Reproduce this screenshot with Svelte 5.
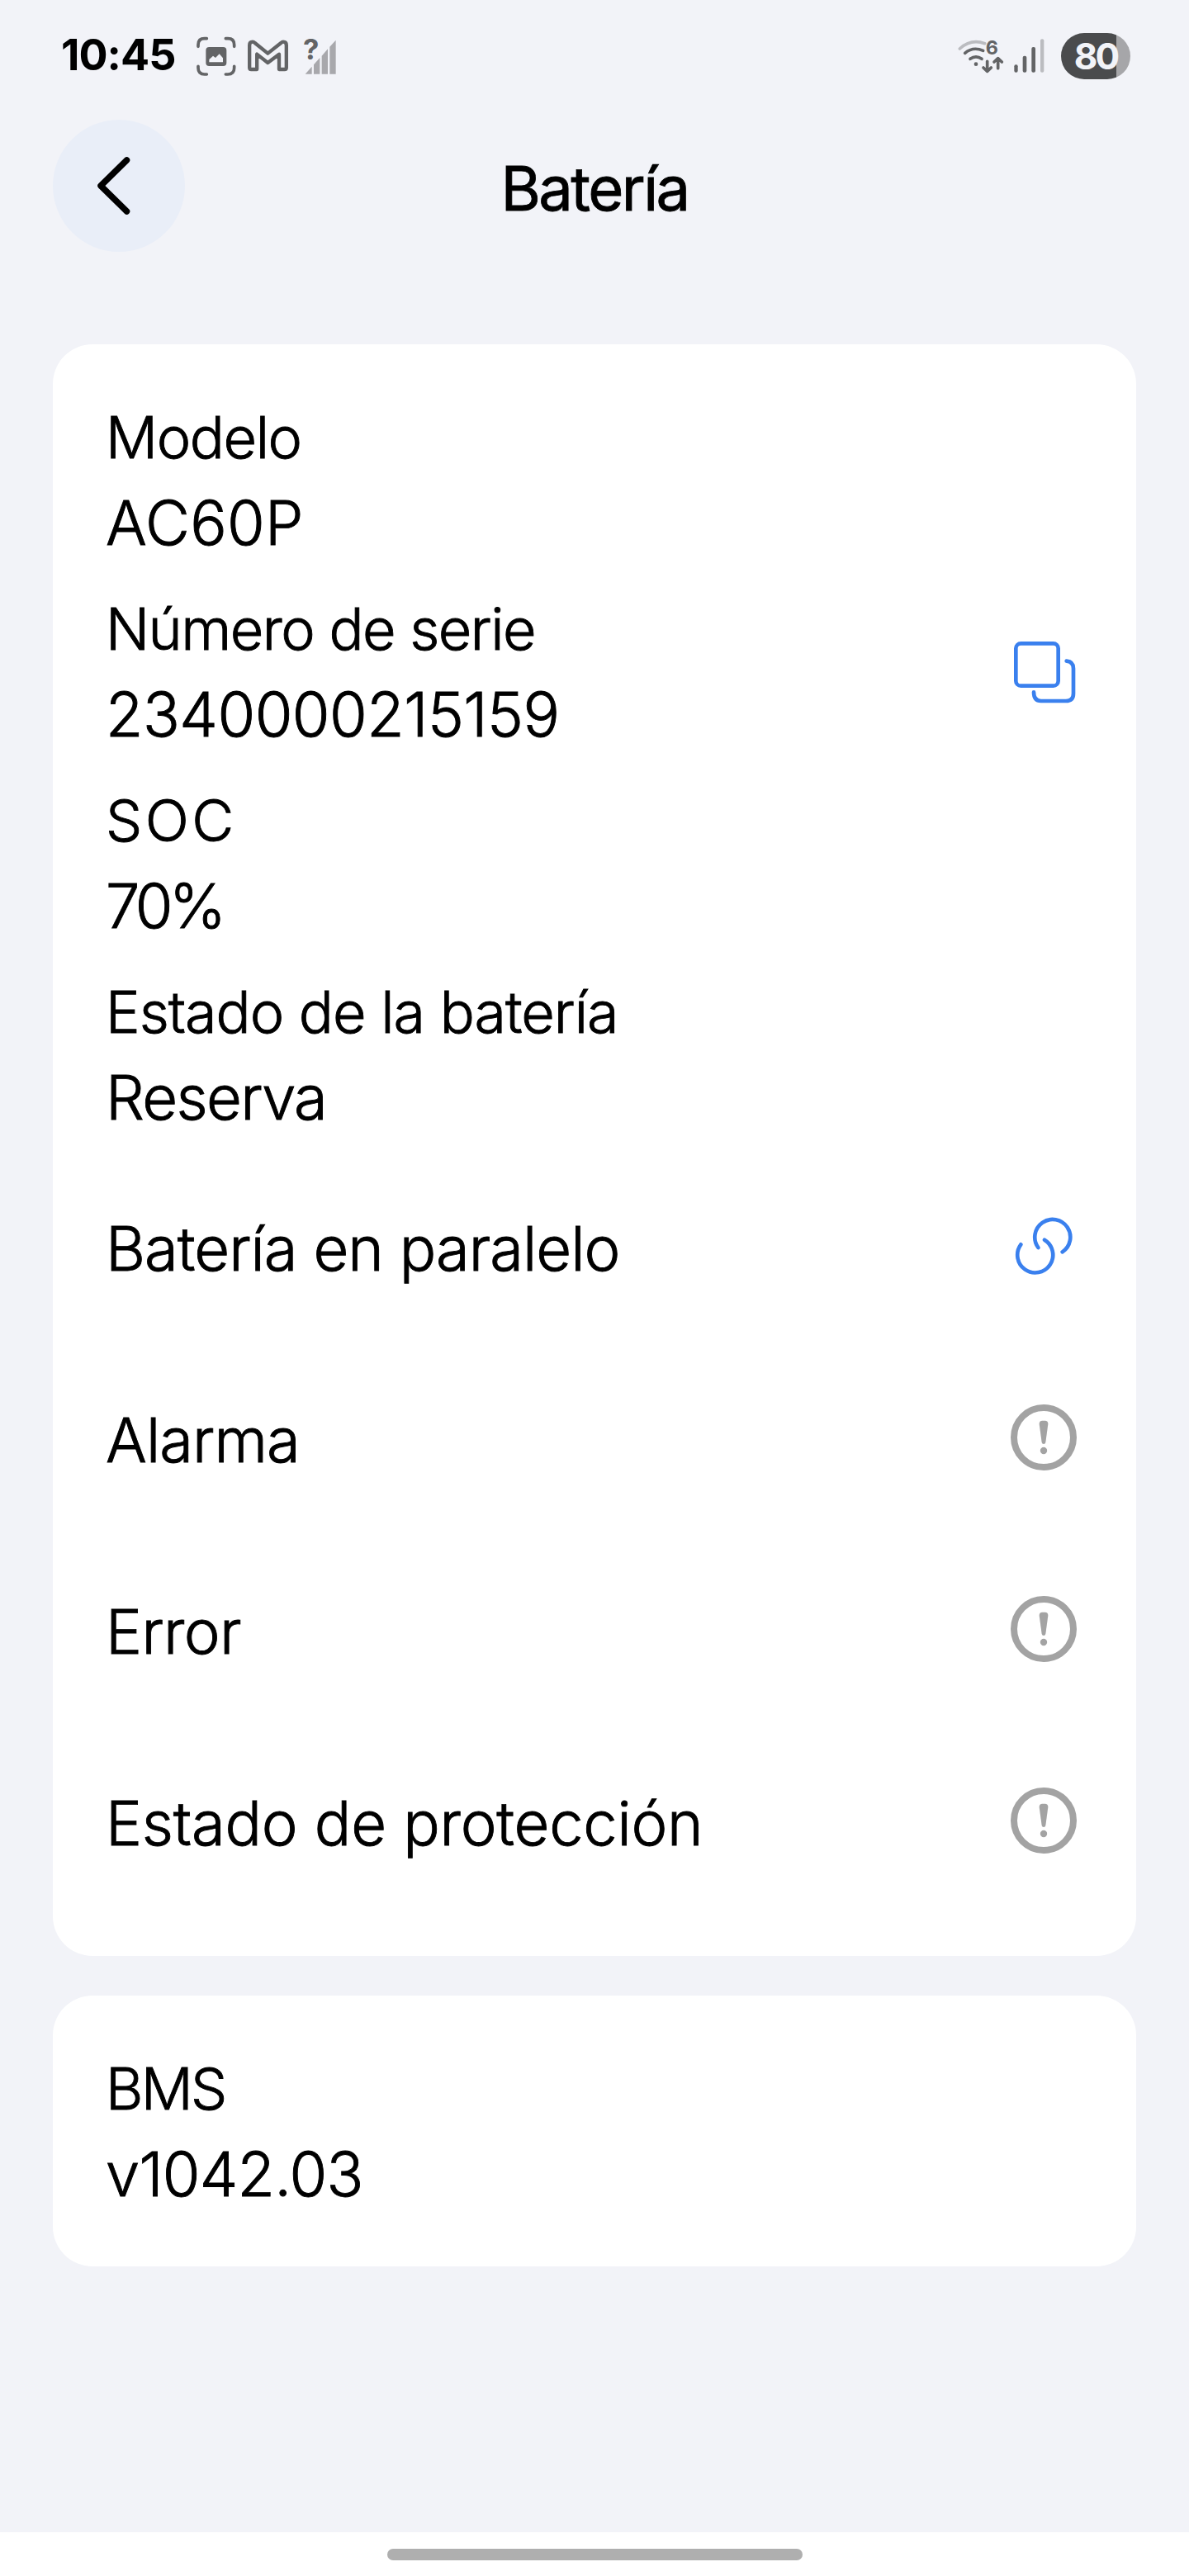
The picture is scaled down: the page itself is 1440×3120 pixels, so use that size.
<script>
  // `track` values are letter-spacing in px for each string.
  const rows = [
    { label: 'Modelo', labelTrack: -1.4, value: 'AC60P', track: 0.3 },
    { label: 'Número de serie', labelTrack: -1.54, value: '2340000215159', track: -0.47, icon: 'copy' },
    { label: 'SOC', labelTrack: 3.5, value: '70%', track: -4.6 },
    { label: 'Estado de la batería', labelTrack: -1.01, value: 'Reserva', track: -1.7 },
    { value: 'Batería en paralelo', track: -0.97, icon: 'link' },
    { value: 'Alarma', track: -0.93, icon: 'alert' },
    { value: 'Error', track: -0.66, icon: 'alert' },
    { value: 'Estado de protección', track: -0.26, icon: 'alert' }
  ];
  const versions = [{ label: 'BMS', labelTrack: -2.74, value: 'v1042.03', track: -0.74 }];
</script>

{#snippet icon(name)}
  {#if name === 'copy'}
    <svg class="icon blue" viewBox="48 45 288 288" aria-hidden="true">
      <rect x="91" y="88" width="154" height="154" rx="18" />
      <path d="M275 152 Q300 154 300 179 V270 Q300 297 273 297 H182 Q156 297 156 265" />
    </svg>
  {:else if name === 'link'}
    <svg class="icon blue" viewBox="48 33 288 288" aria-hidden="true">
      <path d="M172 183 A64.5 64.5 0 1 1 260 199" />
      <path d="M109 172 A64.5 64.5 0 1 0 195 155" />
    </svg>
  {:else if name === 'alert'}
    <svg class="icon grey" viewBox="48 729 288 288" aria-hidden="true">
      <circle class="ring" cx="192" cy="873" r="108" />
      <path d="M176 824 Q176 812 187 812 H197 Q208 812 208 824 L199 891 Q198 897 192 897 Q186 897 185 891 Z" />
      <circle cx="192" cy="921" r="12.5" />
    </svg>
  {/if}
{/snippet}

{#snippet card(list)}
  <section class="card">
    {#each list as row}
      <div class="row" class:single={!row.label}>
        <div class="texts">
          {#if row.label}
            <div class="label" style:letter-spacing="{row.labelTrack}px">{row.label}</div>
          {/if}
          <div class="value" style:letter-spacing="{row.track}px">{row.value}</div>
        </div>
        {@render icon(row.icon)}
      </div>
    {/each}
  </section>
{/snippet}

<div class="screen">
  <div class="status">
    <span class="time">10:45</span>
    <svg class="s-photo" viewBox="560 0 148 300" aria-hidden="true">
      <g class="line">
        <path d="M569 109 V103 Q569 80 592 80 H600" />
        <path d="M669 80 H677 Q700 80 700 103 V109" />
        <path d="M569 181 V187 Q569 210 592 210 H600" />
        <path d="M669 210 H677 Q700 210 700 187 V181" />
      </g>
      <rect x="597" y="111" width="75" height="69" rx="12" class="ink" />
      <path d="M609 166 V156 L623 143 L632 150 L646 136 L659 151 V166 Z" class="paper" />
    </svg>
    <svg class="s-mail" viewBox="747 0 153 300" aria-hidden="true">
      <path class="mail" d="M763 192 Q756.500 192 756.500 185 V104 Q756.500 92 768 92 Q772 92 776 96 L823 134 L871 96 Q875 92 879 92 Q890.500 92 890.500 104 V185 Q890.500 192 884 192 H864 V137 L823 168 L783.500 137 V192 Z" />
    </svg>
    <svg class="s-nosim" viewBox="950 0 126 300" aria-hidden="true">
      <path class="mute" d="M961 209 L985 182 V209 Z M992 209 V175 L1014 150 V209 Z M1021 209 V143 L1043 118 V209 Z M1050 209 V110 L1072 86 V209 Z" />
      <text x="953" y="157" class="q">?</text>
    </svg>
    <span class="spacer"></span>
    <svg class="s-wifi" viewBox="60 0 168 300" aria-hidden="true">
      <path class="arc light" d="M67 117 Q108 80 158 98" />
      <path class="arc" d="M86 133 Q115 108 152 124" />
      <path class="arc" d="M105 154 Q126 139 147 154" />
      <circle cx="126" cy="173" r="7" class="ink" />
      <text x="161" y="138" class="six">6</text>
      <path class="arc" d="M167 163 V198 M153 186 L167 199 L181 186" />
      <path class="arc" d="M206 188 V153 M192 165 L206 152 L220 165" />
    </svg>
    <svg class="s-bars" viewBox="260 0 116 300" aria-hidden="true">
      <rect class="ink" x="264" y="175" width="13" height="28" rx="6" />
      <rect class="ink" x="295" y="143" width="14" height="60" rx="6" />
      <rect class="ink" x="327" y="111" width="14" height="92" rx="6" />
      <rect class="faint" x="359" y="82" width="13" height="121" rx="6" />
    </svg>
    <div class="battery"><span>80</span></div>
  </div>

  <header>
    <button class="back" aria-label="Atrás">
      <svg viewBox="0 0 160 160" aria-hidden="true"><path d="M89.500 49 L58 80 L89.500 111" /></svg>
    </button>
    <h1>Batería</h1>
  </header>

  <main>
    {@render card(rows)}
    {@render card(versions)}
  </main>

  <footer><div class="pill"></div></footer>
</div>

<style>
  :global(body) { margin: 0; background: #f2f3f8; }
  .screen {
    width: 1440px;
    height: 3120px;
    display: flex;
    flex-direction: column;
    background: #f2f3f8;
    color: #000;
    font-family: Inter, "Liberation Sans", sans-serif;
    overflow: hidden;
  }
  .status {
    display: flex;
    height: 100px;
    padding: 20px 71px 0 74px;
    margin-bottom: 25px;
  }
  .status svg { height: 100px; flex: none; }
  .time {
    width: 162.500px;
    font-size: 52px;
    font-weight: 700;
    letter-spacing: -0.93px;
    line-height: 94px;
  }
  .s-photo { width: 49.330px; margin-right: 13px; }
  .s-mail { width: 51px; margin-right: 16.670px; }
  .s-nosim { width: 42px; }
  .spacer { flex: 1; }
  .s-wifi { width: 56px; margin-right: 10.670px; }
  .s-bars { width: 38.670px; margin-right: 19.670px; }
  .line { fill: none; stroke: #636466; stroke-width: 11; stroke-linecap: round; }
  .ink { fill: #636466; }
  .paper { fill: #f2f3f8; }
  .mute { fill: #a8a8ac; }
  .faint { fill: #bbbcc0; }
  .mail { fill: none; stroke: #636466; stroke-width: 13; stroke-linejoin: round; }
  .q { font-size: 104px; font-weight: 700; fill: #636466; }
  .six { font-size: 70px; font-weight: 700; fill: #636466; }
  .arc { fill: none; stroke: #636466; stroke-width: 11; stroke-linecap: round; stroke-linejoin: round; }
  .arc.light { stroke: #bbbcc0; }
  .battery {
    width: 84px;
    height: 56px;
    margin-top: 20px;
    border-radius: 28px;
    background: linear-gradient(to right, #4a4b4d 67px, #a6a6a9 67px);
    color: #f2f3f8;
  }
  .battery span {
    display: block;
    width: 84px;
    text-align: center;
    font-size: 44px;
    font-weight: 700;
    letter-spacing: -3px;
    line-height: 57px;
  }
  header {
    display: grid;
    grid-template-columns: 160px 1fr 160px;
    height: 160px;
    padding: 0 64px;
    margin-bottom: 112px;
  }
  .back {
    width: 160px;
    height: 160px;
    padding: 0;
    border: 0;
    border-radius: 50%;
    background: #e9eef8;
  }
  .back svg { display: block; width: 160px; height: 160px; }
  .back path { fill: none; stroke: #000; stroke-width: 7.500; stroke-linecap: round; stroke-linejoin: round; }
  h1 {
    margin: 0;
    text-align: center;
    font-size: 74px;
    font-weight: 400;
    -webkit-text-stroke: 0.8px #000;
    letter-spacing: -2.590px;
    line-height: 167px;
  }
  main { flex: 1; display: flex; flex-direction: column; gap: 48px; padding: 0 64px; }
  .card { padding: 48px 64px; border-radius: 48px; background: #fff; }
  .row { display: flex; align-items: center; justify-content: space-between; height: 232px; }
  .texts {
    height: 232px;
    box-sizing: border-box;
    padding-top: 14px;
    white-space: nowrap;
    font-weight: 300;
    -webkit-text-stroke: 0.9px #000;
  }
  .single .texts { padding-top: 67px; }
  .label { font-size: 70px; line-height: 102px; }
  .value { font-size: 74px; line-height: 104px; }
  .icon { width: 96px; height: 96px; flex: none; }
  .blue { fill: none; stroke: #3a80ee; stroke-width: 14; stroke-linecap: round; }
  .grey { fill: #a3a3a3; }
  .ring { fill: none; stroke: #a3a3a3; stroke-width: 24; }
  footer { height: 53px; background: #fff; display: flex; justify-content: center; }
  .pill { width: 503px; height: 14px; margin-top: 20px; border-radius: 7px; background: #afafaf; }
</style>
